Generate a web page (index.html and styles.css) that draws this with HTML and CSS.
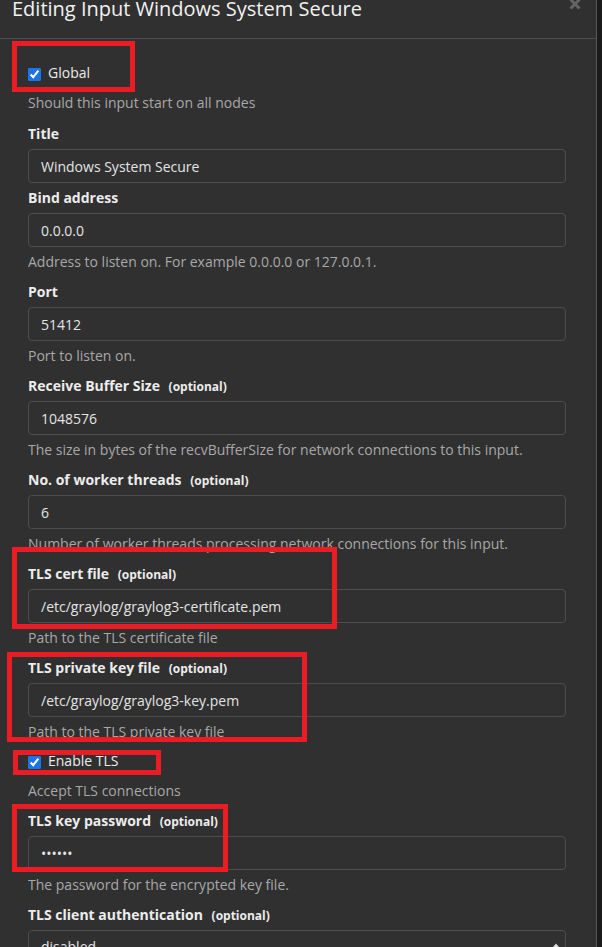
FILE: index.html
```html
<!DOCTYPE html>
<html lang="en">
<head>
<meta charset="utf-8">
<title>Editing Input</title>
<link rel="stylesheet" href="styles.css">
</head>
<body>
<div class="page">
  <div class="modal">
    <div class="modal-header">
      <h4 class="modal-title">Editing Input Windows System Secure</h4>
      <button class="close" type="button" aria-label="Close">
        <svg width="12" height="12" viewBox="0 0 12 12"><path d="M1.5 1.5L10.5 10.5M10.5 1.5L1.5 10.5" stroke="currentColor" stroke-width="3" stroke-linecap="butt"/></svg>
      </button>
    </div>
    <div class="modal-body">
      <div class="check-group global">
        <label class="check"><input type="checkbox" checked><span>Global</span></label>
        <p class="help help-check">Should this input start on all nodes</p>
      </div>

      <div class="field field-nohelp">
        <label class="label">Title</label>
        <input class="control" type="text" value="Windows System Secure">
      </div>

      <div class="field">
        <label class="label">Bind address</label>
        <input class="control" type="text" value="0.0.0.0">
        <p class="help">Address to listen on. For example 0.0.0.0 or 127.0.0.1.</p>
      </div>

      <div class="field">
        <label class="label">Port</label>
        <input class="control" type="text" value="51412">
        <p class="help">Port to listen on.</p>
      </div>

      <div class="field">
        <label class="label">Receive Buffer Size <span class="opt">(optional)</span></label>
        <input class="control" type="text" value="1048576">
        <p class="help">The size in bytes of the recvBufferSize for network connections to this input.</p>
      </div>

      <div class="field">
        <label class="label">No. of worker threads <span class="opt">(optional)</span></label>
        <input class="control" type="text" value="6">
        <p class="help">Number of worker threads processing network connections for this input.</p>
      </div>

      <div class="field">
        <label class="label">TLS cert file <span class="opt">(optional)</span></label>
        <input class="control" type="text" value="/etc/graylog/graylog3-certificate.pem">
        <p class="help">Path to the TLS certificate file</p>
      </div>

      <div class="field">
        <label class="label">TLS private key file <span class="opt">(optional)</span></label>
        <input class="control" type="text" value="/etc/graylog/graylog3-key.pem">
        <p class="help">Path to the TLS private key file</p>
      </div>

      <div class="check-group">
        <label class="check"><input type="checkbox" checked><span>Enable TLS</span></label>
        <p class="help help-check">Accept TLS connections</p>
      </div>

      <div class="field">
        <label class="label">TLS key password <span class="opt">(optional)</span></label>
        <input class="control" type="password" value="secret">
        <p class="help">The password for the encrypted key file.</p>
      </div>

      <div class="field">
        <label class="label">TLS client authentication <span class="opt">(optional)</span></label>
        <div class="select-wrap">
          <select class="control select">
            <option>disabled</option>
            <option>optional</option>
            <option>required</option>
          </select>
          <svg class="select-arrows" width="8" height="12" viewBox="0 0 8 12"><path d="M4 0.5L7.5 4.5H0.5Z M4 11.5L7.5 7.5H0.5Z" fill="#dcdcdc"/></svg>
        </div>
      </div>
    </div>
  </div>

  <div class="mark mark-global"></div>
  <div class="mark mark-cert"></div>
  <div class="mark mark-key"></div>
  <div class="mark mark-tls"></div>
  <div class="mark mark-pass"></div>
</div>
</body>
</html>
```

FILE: styles.css
```css
* { box-sizing: border-box; }

html, body {
  margin: 0;
  padding: 0;
}

body {
  background: #1b1b1b;
  font-family: "Open Sans", "Noto Sans", sans-serif;
  font-size: 14px;
  line-height: 20px;
  color: #e6e6e6;
  height: 947px;
  overflow: hidden;
}

.page {
  position: relative;
  width: 602px;
  height: 947px;
}

.modal {
  width: 597px;
  height: 947px;
  background: #303030;
  border-right: 1px solid #575757;
  overflow: hidden;
}

.modal-header {
  height: 39px;
  border-bottom: 1px solid #4c4c4c;
  display: flex;
  justify-content: space-between;
  align-items: flex-start;
  padding: 0 15px 0 12px;
}

.modal-title {
  margin: 0;
  padding-top: 1px;
  font-size: 20px;
  line-height: 16px;
  font-weight: 400;
  color: #f2f2f2;
}

.close {
  margin: -2px 0 0 0;
  padding: 0;
  border: 0;
  background: none;
  color: #636363;
  width: 12px;
  height: 12px;
  display: block;
}

.close svg { display: block; }

.modal-body {
  padding: 15px 30px 0 28px;
}

.check-group.global {
  margin-top: 10px;
}

.check {
  display: flex;
  align-items: flex-start;
  line-height: 18px;
  color: #ececec;
}

.check input {
  margin: 4px 7px 0 0;
  width: 13px;
  height: 13px;
  accent-color: #1a73e8;
}

.help {
  margin: 5px 0 10px;
  color: #a8a8a8;
  line-height: 20px;
}

.help-check {
  margin-top: 11px;
}

.global .help-check {
  margin-bottom: 11px;
}

.label {
  display: block;
  font-weight: 700;
  line-height: 20px;
  height: 20px;
  margin-bottom: 5px;
  color: #ececec;
}

.opt {
  font-size: 12px;
  line-height: 14px;
  margin-left: 5px;
}

.control {
  display: block;
  width: 100%;
  height: 34px;
  padding: 6px 12px;
  font-family: "Open Sans", "Noto Sans", sans-serif;
  font-size: 14px;
  line-height: 20px;
  color: #e4e4e4;
  background: #303030;
  border: 1px solid #4d4d4d;
  border-radius: 4px;
  outline: none;
}

.field-nohelp .control {
  margin-bottom: 5px;
}

.select-wrap {
  position: relative;
}

.select {
  appearance: none;
  -webkit-appearance: none;
}

.select-arrows {
  position: absolute;
  right: 6px;
  top: 13px;
}

.mark {
  position: absolute;
  border: 5px solid #ec1c24;
}

.mark-global { left: 12px; top: 41px; width: 123px; height: 51px; }
.mark-cert   { left: 12px; top: 547px; width: 325px; height: 82px; }
.mark-key    { left: 7px;  top: 652px; width: 300px; height: 90px; }
.mark-tls    { left: 13px; top: 750px; width: 148px; height: 25px; }
.mark-pass   { left: 12px; top: 804px; width: 216px; height: 68px; }
```
